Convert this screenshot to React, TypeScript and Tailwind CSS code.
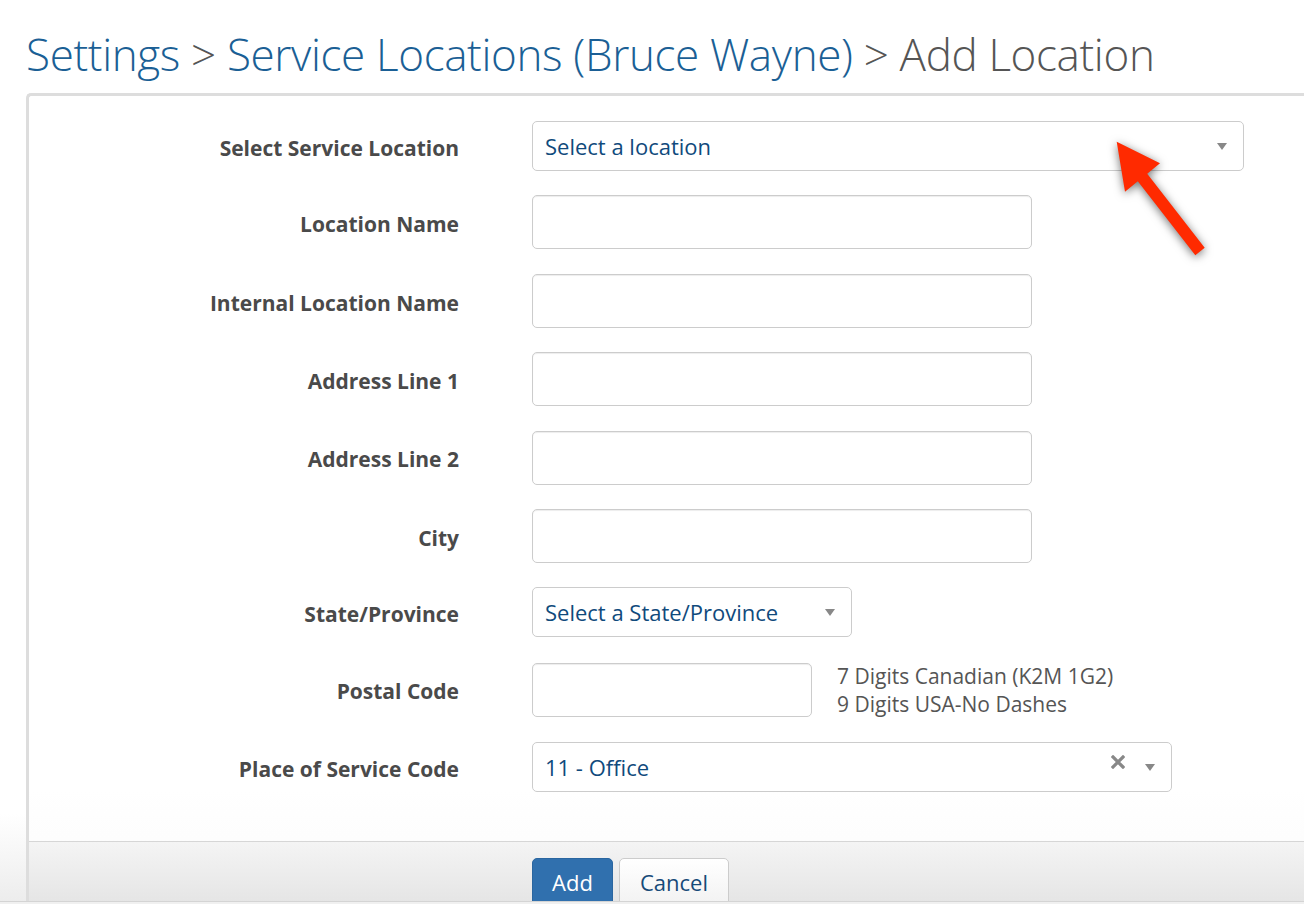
import React from "react";

const font = { fontFamily: '"Open Sans", "Noto Sans", sans-serif' };

function Caret({ className = "" }: { className?: string }) {
  return (
    <svg width="10" height="7" viewBox="0 0 10 7" className={className}>
      <path d="M0 0 L10 0 L5 7 Z" fill="#888" />
    </svg>
  );
}

function Label({ children }: { children: React.ReactNode }) {
  return (
    <div className="w-[430px] shrink-0 pt-[5px] text-right text-[21px] font-bold text-[#4a4a4a]">
      {children}
    </div>
  );
}

function TextInput({ w }: { w: string }) {
  return (
    <div
      className={`${w} h-[54px] rounded-[5px] border border-[#cccccc] bg-white shadow-[inset_0_1px_1px_rgba(0,0,0,0.075)]`}
    />
  );
}

function Row({ label, children }: { label: string; children: React.ReactNode }) {
  return (
    <div className="flex items-center">
      <Label>{label}</Label>
      <div className="ml-[73px] flex items-center">{children}</div>
    </div>
  );
}

export default function App() {
  return (
    <div
      className="relative h-[904px] w-[1304px] overflow-hidden bg-[linear-gradient(to_bottom,#ffffff_90%,#ececec)]"
      style={font}
    >
      <h1 className="pl-[26px] pt-[24px] text-[44px] leading-[60px] font-light tracking-[-0.36px] whitespace-nowrap">
        <span className="text-[#1b5f95]">Settings</span>
        <span className="text-[#555555]"> &gt; </span>
        <span className="text-[#1b5f95]">Service Locations (Bruce Wayne)</span>
        <span className="text-[#555555]"> &gt; Add Location</span>
      </h1>

      <div className="mt-[9px] ml-[26px] w-[1300px] rounded-tl-[5px] border-l-[3px] border-t-[3px] border-[#dddddd] bg-[linear-gradient(to_bottom,#ffffff_85%,#fafafa)]">
        <div className="flex flex-col gap-[24.4px] pt-[25px] pb-[49px]">
          <Row label="Select Service Location">
            <div className="flex h-[50px] w-[712px] items-center justify-between rounded-[5px] border border-[#cccccc] bg-white pl-[12px] pr-[16px]">
              <span className="text-[22px] text-[#104a7c]">Select a location</span>
              <Caret />
            </div>
          </Row>
          <Row label="Location Name">
            <TextInput w="w-[500px]" />
          </Row>
          <Row label="Internal Location Name">
            <TextInput w="w-[500px]" />
          </Row>
          <Row label="Address Line 1">
            <TextInput w="w-[500px]" />
          </Row>
          <Row label="Address Line 2">
            <TextInput w="w-[500px]" />
          </Row>
          <Row label="City">
            <TextInput w="w-[500px]" />
          </Row>
          <Row label="State/Province">
            <div className="flex h-[50px] w-[320px] items-center justify-between rounded-[5px] border border-[#cccccc] bg-white pl-[12px] pr-[16px]">
              <span className="text-[22px] text-[#104a7c]">Select a State/Province</span>
              <Caret />
            </div>
          </Row>
          <Row label="Postal Code">
            <TextInput w="w-[280px]" />
            <div className="ml-[25px] text-[21px] leading-[28px] text-[#555555]">
              <div>7 Digits Canadian (K2M 1G2)</div>
              <div>9 Digits USA-No Dashes</div>
            </div>
          </Row>
          <Row label="Place of Service Code">
            <div className="flex h-[50px] w-[640px] items-center justify-between rounded-[5px] border border-[#cccccc] bg-white pl-[12px] pr-[16px]">
              <span className="text-[22px] text-[#104a7c]">11 - Office</span>
              <div className="flex items-center gap-[20px]">
                <svg width="14" height="14" viewBox="0 0 14 14" className="-mt-[10px]">
                  <path d="M2 2 L12 12 M12 2 L2 12" stroke="#888" strokeWidth="3.2" strokeLinecap="square" />
                </svg>
                <Caret />
              </div>
            </div>
          </Row>
        </div>

        <div className="flex h-[70px] gap-[6px] border-t border-[#d6d6d6] bg-[linear-gradient(to_bottom,#f4f4f4,#e3e3e3)] pl-[503px] pt-[16px]">
          <button className="h-[48px] w-[81px] rounded-t-[5px] border border-[#2a66a0] bg-[#3070ae] text-[22px] text-white" style={font}>
            Add
          </button>
          <button className="h-[48px] w-[110px] rounded-t-[5px] border border-[#cccccc] bg-[linear-gradient(to_bottom,#ffffff,#f2f2f2)] text-[22px] text-[#164a78]" style={font}>
            Cancel
          </button>
        </div>
      </div>

      <div className="absolute bottom-0 left-0 h-[3px] w-full border-t border-[#d4d4d4] bg-[#f0f0f0]" />

      <svg
        className="pointer-events-none absolute left-0 top-0 drop-shadow-[0_2px_5px_rgba(0,0,0,0.55)]"
        width="1304"
        height="904"
        viewBox="0 0 1304 904"
      >
        <polygon
          points="1116.7,141.7 1160,163.3 1147.2,173.8 1204.7,247.8 1195.3,255.2 1137.8,181.2 1125,191.7"
          fill="#ff2a00"
        />
      </svg>
    </div>
  );
}
